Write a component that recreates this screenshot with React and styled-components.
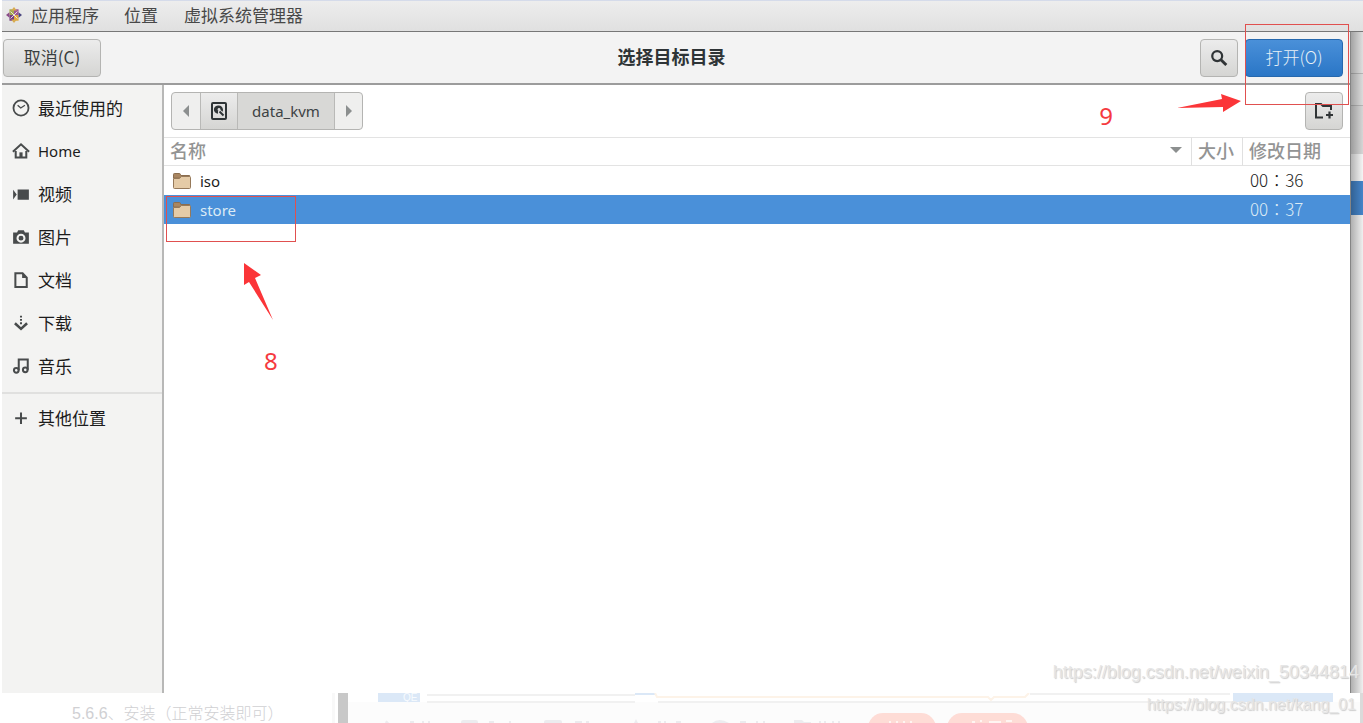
import React from 'react';
import styled, { createGlobalStyle } from 'styled-components';

const cjk = `'Noto Sans CJK SC', sans-serif`;
const latin = `'Noto Sans', 'Noto Sans CJK SC', sans-serif`;

const GlobalStyle = createGlobalStyle`
  * {
    box-sizing: border-box;
  }
  body {
    background: #fff;
    color: #1c1c1c;
    font-family: ${cjk};
    font-size: 17px;
    line-height: 24px;
    margin: 0;
    overflow: hidden;
  }
  button {
    font: inherit;
    padding: 0;
  }
`;

const Page = styled.div`
  display: flex;
  flex-direction: column;
  height: 100vh;
  overflow: hidden;
  position: relative;
`;

const Desktop = styled.div`
  display: flex;
  flex: 1;
  flex-direction: column;
  margin-left: 2px;
  min-height: 0;
`;

const MenuBar = styled.nav`
  align-items: center;
  background: linear-gradient(#ededed, #e0e0e0);
  border-bottom: 1px solid #777;
  border-top: 1px solid #d5dbea;
  color: #484848;
  display: flex;
  height: 32px;
  padding: 0 0 2px 4px;
  svg {
    margin-right: 9px;
  }
`;

const MenuItem = styled.button`
  background: none;
  border: 0;
  color: inherit;
  margin-right: ${props => props.$gap || 0}px;
`;

const Workspace = styled.div`
  display: flex;
  flex: 1;
  min-height: 0;
`;

const Dialog = styled.section`
  background: #fff;
  display: flex;
  flex: 1;
  flex-direction: column;
  min-width: 0;
  position: relative;
`;

const HeaderBar = styled.header`
  align-items: center;
  background: #f3f3f3;
  border-bottom: 2px solid #9c9c9c;
  display: grid;
  grid-template-columns: 1fr auto 1fr;
  height: 53px;
  padding: 0 7px 0 1px;
`;

const Title = styled.h1`
  color: #2e3436;
  font-size: 18px;
  font-weight: 700;
  line-height: 24px;
  margin: 0;
  padding: 0 3px 3px 0;
`;

const Actions = styled.div`
  display: flex;
  gap: 7px;
  justify-content: flex-end;
`;

const Button = styled.button`
  align-items: center;
  background: ${props =>
    props.$primary ? 'linear-gradient(#4a90d9, #2a76c6)' : 'linear-gradient(#ececec, #d5d5d3)'};
  border: 1px solid ${props => (props.$primary ? '#2668ad' : '#b4b4b2')};
  border-radius: 4px;
  color: ${props => (props.$primary ? '#e6f0f6' : '#3a3e3f')};
  display: flex;
  font-weight: ${props => (props.$primary ? 300 : 400)};
  height: 38px;
  justify-content: center;
  padding-bottom: 2px;
  width: ${props => props.$width}px;
`;

const Body = styled.div`
  display: flex;
  flex: 1;
  min-height: 0;
`;

const Sidebar = styled.aside`
  background: #f3f3f2;
  border-right: 2px solid #b8b8b7;
  padding-top: 2px;
  width: 162px;
`;

const Place = styled.a`
  align-items: center;
  color: #1c1c1c;
  display: flex;
  font-family: ${props => (props.$latin ? latin : cjk)};
  font-size: ${props => (props.$latin ? 15 : 17)}px;
  gap: 8px;
  height: 43px;
  padding: 0 0 1px 10px;
  text-decoration: none;
`;

const Separator = styled.hr`
  border: 0;
  border-top: 2px solid #e0e0df;
  margin: 4px 0 3px;
`;

const Main = styled.main`
  flex: 1;
  min-width: 0;
  position: relative;
`;

const PathRow = styled.div`
  align-items: center;
  display: flex;
  height: 52px;
  justify-content: space-between;
  padding: 0 7px;
`;

const PathBar = styled.div`
  background: #efefee;
  border: 1px solid #b4b4b2;
  border-radius: 4px;
  display: flex;
  height: 38px;
  overflow: hidden;
`;

const PathButton = styled.button`
  align-items: center;
  background: ${props => props.$fill || 'transparent'};
  border: 0;
  border-left: ${props => (props.$divided ? '1px solid #b9b9b7' : '0')};
  color: #3d4244;
  display: flex;
  font-family: ${latin};
  font-size: 15px;
  justify-content: center;
  width: ${props => props.$width}px;
`;

const FileTable = styled.table`
  border-collapse: separate;
  border-spacing: 0;
  table-layout: fixed;
  width: 100%;
`;

const HeadCell = styled.th`
  border-bottom: 1px solid #e3e3e3;
  border-left: ${props => (props.$divided ? '1px solid #e0e0e0' : '0')};
  border-top: 1px solid #e3e3e3;
  color: #939494;
  font-size: 18px;
  font-weight: 500;
  height: 29px;
  line-height: 24px;
  padding: 0 6px 3px;
  text-align: left;
  white-space: nowrap;
`;

const HeadLabel = styled.div`
  align-items: center;
  display: flex;
  justify-content: space-between;
`;

const FileRow = styled.tr`
  background: ${props => (props.$selected ? '#4a90d9' : 'transparent')};
  color: ${props => (props.$selected ? '#dcebf5' : '#1c1c1c')};
`;

const FileCell = styled.td`
  height: 29px;
  line-height: 24px;
  padding: 0 8px;
  vertical-align: middle;
`;

// the wide colon sits in the middle of its cell in the traditional face
const DateCell = styled(FileCell)`
  font-family: 'Noto Sans CJK TC', sans-serif;
  font-weight: 300;
  padding-bottom: 2px;
`;

const FileName = styled.div`
  align-items: center;
  display: flex;
  font-family: ${latin};
  font-size: 15px;
  gap: 8px;
`;

const Backdrop = styled.div`
  border-left: 1px solid #858585;
  display: flex;
  flex-direction: column;
  position: relative;
  width: 13px;
  &::after {
    background: linear-gradient(to right, rgba(0, 0, 0, 0.28), rgba(0, 0, 0, 0.02));
    content: '';
    inset: 0;
    position: absolute;
  }
`;

const Slice = styled.div`
  background: ${props => props.$fill};
  border-bottom: ${props => (props.$line ? '1px solid #bbb' : '0')};
  flex: ${props => (props.$height ? `0 0 ${props.$height}px` : 1)};
`;

const Footer = styled.footer`
  display: flex;
  height: 30px;
  position: relative;
`;

const Caption = styled.p`
  color: #d0d0d3;
  flex: 0 0 332px;
  font-family: 'Liberation Sans', ${cjk};
  font-size: 16px;
  font-weight: 300;
  line-height: 18px;
  margin: 0;
  padding: 12px 0 0 72px;
  white-space: nowrap;
`;

const Rule = styled.div`
  background: ${props => props.$fill};
  margin-right: ${props => props.$after || 0}px;
  width: ${props => props.$width}px;
`;

const FadedPage = styled.div`
  background: linear-gradient(#fff 9px, #fcfcfc 9px);
  flex: 1;
  overflow: hidden;
  svg {
    display: block;
  }
`;

const Marker = styled.div`
  border: 1px solid #e0504f;
  pointer-events: none;
  position: absolute;
`;

const StoreMarker = styled(Marker)`
  height: 46px;
  left: 2px;
  top: 111px;
  width: 130px;
`;

const OpenMarker = styled(Marker)`
  height: 81px;
  right: 14px;
  top: 24px;
  width: 104px;
`;

const Step = styled.span`
  color: #f53a3f;
  font-family: ${latin};
  font-size: 24px;
  line-height: 28px;
  position: absolute;
  ${props => props.$place}
`;

const Arrow = styled.svg`
  position: absolute;
  ${props => props.$place}
`;

const Watermark = styled.span`
  color: #e6e6e6;
  font-family: 'Liberation Sans', sans-serif;
  font-size: ${props => props.$size}px;
  line-height: 20px;
  position: absolute;
  right: ${props => props.$right}px;
  bottom: ${props => props.$bottom}px;
  text-shadow: 1px 1px 1px #ccc;
`;

const Icon = ({ children, size = 18 }) => (
  <svg
    width={size}
    height={size}
    viewBox="0 0 16 16"
    fill="none"
    stroke="#484b4c"
    strokeWidth="1.8"
    aria-hidden="true"
  >
    {children}
  </svg>
);

const solid = { fill: '#484b4c', stroke: 'none' };

const icons = {
  recent: (
    <>
      <circle cx="8" cy="8" r="6.7" strokeWidth="1.6" />
      <path d="M5 5.5 7.8 8 11.5 5.5" strokeWidth="1.2" />
    </>
  ),
  home: (
    <>
      <path d="M.8 8.6 8 2l7.2 6.6" />
      <path d="M3.3 8v5.8h9.4V8" />
      <path d="M6.6 14V9.2h2.8V14z" {...solid} />
    </>
  ),
  video: <path d="M5 4h10v9H5zM1 4.2l3.2 4.3L1 12.8z" {...solid} />,
  photo: (
    <path
      d="M5.5 2h5l1 2H15v10H1V4h3.5zM8 5a4 4 0 1 0 0 8 4 4 0 0 0 0-8zm0 1.8a2.2 2.2 0 1 1 0 4.4 2.2 2.2 0 0 1 0-4.4z"
      fillRule="evenodd"
      {...solid}
    />
  ),
  document: (
    <>
      <path d="M3 1.9h6.4L13.1 6v8.2H3z" />
      <path d="M9 1.5V6.2h4.4z" {...solid} />
    </>
  ),
  download: (
    <>
      <path d="M8 1.5v8.5" strokeDasharray="1.7 1.2" />
      <path d="m2.6 8.2 5.4 5 5.4-5" strokeWidth="2.3" />
    </>
  ),
  music: (
    <>
      <path d="M6 11.7V2.3h8v9" />
      <circle cx="3.8" cy="11.8" r="2.1" />
      <circle cx="11.8" cy="11.4" r="2.1" />
    </>
  ),
  plus: <path d="M8 3v10.4M2.8 8.2h10.4" />,
};

const places = [
  ['recent', '最近使用的'],
  ['home', 'Home'],
  ['video', '视频'],
  ['photo', '图片'],
  ['document', '文档'],
  ['download', '下载'],
  ['music', '音乐'],
];

const files = [
  { name: 'iso', date: '00：36' },
  { name: 'store', date: '00：37', selected: true },
];

const DistroLogo = () => (
  <svg width="16" height="16" viewBox="0 0 14 14" aria-hidden="true">
    <path d="M3 2h4v5H3z" fill="#a5a950" />
    <path d="M7 2h4v5H7z" fill="#9d5692" />
    <path d="M3 7h4v5H3z" fill="#75407f" />
    <path d="M7 7h4v5H7z" fill="#e0aa3b" />
    <path d="M7 0l2.5 3h-5zM7 14l2.5-3h-5z" fill="#d8ac51" />
    <path d="M0 7l3-2.5v5z" fill="#8b4a88" />
    <path d="M14 7l-3-2.5v5z" fill="#4b467f" />
    <path d="m4 4 6 6M10 4l-6 6" stroke="#f2eae8" strokeWidth=".8" />
  </svg>
);

const Folder = () => (
  <svg width="20" height="18" viewBox="0 0 20 18" aria-hidden="true">
    <path d="M1.5 6V2.4q0-.9.9-.9h5q.8 0 1 .8l.4 1.2h8.8v3z" fill="#a98661" stroke="#8b6d4e" />
    <path d="M1.5 6.5h6l1.8-2h8.2q1 0 1 1v10q0 1-1 1h-15q-1 0-1-1z" fill="#e5cba7" stroke="#96795a" />
  </svg>
);

const Triangle = ({ d, width = 8, height = 12 }) => (
  <svg width={width} height={height} viewBox={`0 0 ${width} ${height}`} aria-hidden="true">
    <path d={d} fill="#8c8f8f" />
  </svg>
);

// tops of the faded toolbar, cut off by the window edge
const FadedToolbar = () => (
  <svg width="1012" height="30" viewBox="348 0 1012 30" aria-hidden="true">
    <path d="M378 0h42v9h-42zM635 0h20v2h-20zM1233 0h100v9h-100z" fill="#dbe8f7" />
    <path d="M427 2h208M427 9h208M658 9h575M1030 1h200" stroke="#f1f1f1" strokeWidth="2" />
    <path d="M655 0l2 4h331l3 3 3-3h31l4-4" fill="none" stroke="#fdf3e8" strokeWidth="2" />
    <text x="403" y="8" fontFamily="Liberation Sans" fontSize="10" fill="#f8fbfe">
      QE
    </text>
    <path
      d="M385 30q1-5 4 0zM461 30v-1q0-2 2-2h13q2 0 2 2v1zM544 30v-1q0-2 2-2h14q2 0 2 2v1zM634 30l2-4 2 4zM712 30q7-6 17 0zM794 30v-3h8l2 2h7v1z"
      fill="#ececef"
    />
    <path
      d="M410 29h4M422 29h2M428 29h2M489 29h5M509 29h2M575 29h7M586 29h3M658 29h3M664 29h2M676 29h5M740 29h6M756 29h2M763 29h2M819 29h2M824 29h2M832 29h2M838 29h2"
      stroke="#ebebee"
      strokeWidth="2"
    />
    <rect x="868" y="20" width="68" height="30" rx="15" fill="#fedcd6" />
    <rect x="947" y="20" width="81" height="30" rx="15" fill="#fedcd6" />
    <path d="M889 29h2M896 29h2M903 29h2M910 29h2M972 29h3M980 28h2M989 29h12M1006 28h6" stroke="#fff5f2" strokeWidth="2" />
  </svg>
);

const App = () => (
  <>
    <GlobalStyle />
    <Page>
      <Desktop>
        <MenuBar>
          <DistroLogo />
          <MenuItem $gap={25}>应用程序</MenuItem>
          <MenuItem $gap={26}>位置</MenuItem>
          <MenuItem>虚拟系统管理器</MenuItem>
        </MenuBar>
        <Workspace>
          <Dialog>
            <HeaderBar>
              <Button $width={98}>取消(C)</Button>
              <Title>选择目标目录</Title>
              <Actions>
                <Button $width={38} aria-label="搜索">
                  <Icon>
                    <circle cx="6.4" cy="7.2" r="4.4" stroke="#303436" strokeWidth="2" />
                    <path d="m9.7 10.4 4.8 4.7" stroke="#303436" strokeWidth="2.6" />
                  </Icon>
                </Button>
                <Button $primary $width={98}>
                  打开(O)
                </Button>
              </Actions>
            </HeaderBar>
            <Body>
              <Sidebar>
                {places.map(([icon, label]) => (
                  <Place key={icon} href="#" $latin={icon === 'home'}>
                    <Icon>{icons[icon]}</Icon>
                    {label}
                  </Place>
                ))}
                <Separator />
                <Place href="#">
                  <Icon>{icons.plus}</Icon>
                  其他位置
                </Place>
              </Sidebar>
              <Main>
                <PathRow>
                  <PathBar>
                    <PathButton $width={28} aria-label="后退">
                      <Triangle d="M7 0v12L1 6z" />
                    </PathButton>
                    <PathButton $width={37} $divided $fill="linear-gradient(#ececec, #d5d5d3)" aria-label="磁盘">
                      <svg width="18" height="20" viewBox="0 0 18 20" aria-hidden="true">
                        <rect x="2" y="2" width="14" height="16" rx="1" fill="none" stroke="#2e3436" strokeWidth="2" />
                        <path d="M9 4.5a4.2 4.2 0 1 0-1 8.3V10l2-1.5 2.5 2.2A4.2 4.2 0 0 0 9 4.5z" fill="#2e3436" />
                        <circle cx="9" cy="8.5" r="1.4" fill="#ddd" />
                        <path d="m9.5 10.5 4 4" stroke="#2e3436" strokeWidth="2" />
                      </svg>
                    </PathButton>
                    <PathButton $width={97} $divided $fill="#d8d8d6">
                      data_kvm
                    </PathButton>
                    <PathButton $width={28} $divided aria-label="前进">
                      <Triangle d="M1 0v12l6-6z" />
                    </PathButton>
                  </PathBar>
                  <Button $width={38} aria-label="新建文件夹">
                    <svg width="20" height="18" viewBox="0 0 20 18" fill="none" stroke="#303436" strokeWidth="2" aria-hidden="true">
                      <path d="M9 16.5H2V3h5l2 2h8v4" />
                      <path d="M15.5 10.5v7M12 14h7" strokeWidth="2.2" />
                    </svg>
                  </Button>
                </PathRow>
                <FileTable>
                  <colgroup>
                    <col />
                    <col width="51" />
                    <col width="108" />
                  </colgroup>
                  <thead>
                    <tr>
                      <HeadCell>
                        <HeadLabel>
                          名称
                          <Triangle d="M1 1h12L7 7z" width={16} height={8} />
                        </HeadLabel>
                      </HeadCell>
                      <HeadCell $divided>大小</HeadCell>
                      <HeadCell $divided>修改日期</HeadCell>
                    </tr>
                  </thead>
                  <tbody>
                    {files.map(file => (
                      <FileRow key={file.name} $selected={file.selected}>
                        <FileCell>
                          <FileName>
                            <Folder />
                            {file.name}
                          </FileName>
                        </FileCell>
                        <FileCell />
                        <DateCell>{file.date}</DateCell>
                      </FileRow>
                    ))}
                  </tbody>
                </FileTable>
                <StoreMarker />
                <Arrow $place="left: 80px; top: 178px;" width="32" height="60" aria-hidden="true">
                  <path d="M0 0 17 12 11 15 29 57 5 19 0 22z" fill="#fb3538" />
                </Arrow>
                <Step $place="left: 100px; top: 262px;">8</Step>
              </Main>
            </Body>
          </Dialog>
          <Backdrop>
            <Slice $height={42} $fill="#e3e3e3" $line />
            <Slice $height={32} $fill="#e0e0e0" $line />
            <Slice $height={48} $fill="#dadada" />
            <Slice $height={27} $fill="#fafafa" />
            <Slice $height={34} $fill="#4687cd" />
            <Slice $fill="#f4f4f4" />
          </Backdrop>
        </Workspace>
      </Desktop>
      <Footer>
        <Caption>5.6.6、安装（正常安装即可）</Caption>
        <Rule $width={3} $fill="#f8f8f8" $after={3} />
        <Rule $width={10} $fill="#c8c8c8" />
        <FadedPage>
          <FadedToolbar />
        </FadedPage>
        <Rule $width={3} $fill="#dadada" />
      </Footer>
      <OpenMarker />
      <Arrow $place="right: 121px; top: 93px;" width="66" height="20" aria-hidden="true">
        <path d="M1 15 46 6 45 1 65 8 47 19V14z" fill="#fb3538" />
      </Arrow>
      <Step $place="right: 250px; top: 102px;">9</Step>
      <Watermark $size={18} $right={4} $bottom={41}>
        https://blog.csdn.net/weixin_50344814
      </Watermark>
      <Watermark $size={16} $right={7} $bottom={8}>
        https://blog.csdn.net/kang_01
      </Watermark>
    </Page>
  </>
);

export default App;
